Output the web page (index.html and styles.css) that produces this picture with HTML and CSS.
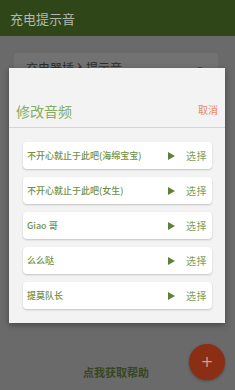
FILE: index.html
```html
<!DOCTYPE html>
<html>
<head>
<meta charset="utf-8">
<link rel="stylesheet" href="styles.css">
</head>
<body>
<div class="app">
  <div class="header"><span class="title">充电提示音</span></div>
  <div class="main">
    <div class="bgcard">
      <span class="bgcard-text">充电器插入提示音</span>
      <span class="bgdot"></span>
    </div>
    <div class="help">点我获取帮助</div>
  </div>
  <div class="fab"><span class="plus">+</span></div>
  <div class="dialog">
    <div class="dlg-head">
      <span class="dlg-title">修改音频</span>
      <span class="dlg-cancel">取消</span>
    </div>
    <div class="dlg-list">
      <div class="item"><span class="name">不开心就止于此吧(海绵宝宝)</span><span class="play"></span><span class="pick">选择</span></div>
      <div class="item"><span class="name">不开心就止于此吧(女生)</span><span class="play"></span><span class="pick">选择</span></div>
      <div class="item"><span class="name">Giao 哥</span><span class="play"></span><span class="pick">选择</span></div>
      <div class="item"><span class="name">么么哒</span><span class="play"></span><span class="pick">选择</span></div>
      <div class="item"><span class="name">提莫队长</span><span class="play"></span><span class="pick">选择</span></div>
    </div>
  </div>
</div>
</body>
</html>
```
FILE: styles.css
```css
* { box-sizing: border-box; }
html, body { margin: 0; padding: 0; }
body {
  width: 235px; height: 390px; overflow: hidden;
  font-family: "Noto Sans CJK SC", "Noto Sans", sans-serif;
  background: #6a6a6a;
}
.app { position: relative; width: 235px; height: 390px; display: flex; flex-direction: column; }
.header {
  height: 36px; background: #2f4619;
  display: flex; align-items: center; padding-left: 10px;
}
.title { color: #b3b8ad; font-size: 13px; line-height: 1; }
.main { flex: 1; display: flex; flex-direction: column; padding: 17px 17px 0 14px; }
.bgcard {
  height: 40px; background: #727272; border-radius: 3px;
  display: flex; justify-content: space-between; align-items: flex-start;
  padding: 8px 14px 0 12px;
}
.bgcard-text { color: #2c2c2c; font-size: 12px; line-height: 14px; }
.bgdot { width: 8px; height: 4px; margin-top: 6px; border-radius: 4px 4px 0 0; background: #5a3a34; }
.help {
  margin-top: auto; margin-bottom: 10px; text-align: center;
  font-size: 11px; color: #37461f; font-weight: 600;
}
.fab {
  position: absolute; left: 189px; top: 344px; width: 36px; height: 36px;
  border-radius: 50%; background: #8c2e13;
  display: flex; align-items: center; justify-content: center;
  box-shadow: 0 1px 3px rgba(0,0,0,0.3);
}
.plus { color: #d3a08a; font-size: 15px; line-height: 1; font-family: "DejaVu Sans", sans-serif; }
.dialog {
  position: absolute; left: 9px; top: 68px; width: 216px; height: 255px;
  background: #f3f3f3; box-shadow: 0 2px 6px rgba(0,0,0,0.35);
  display: flex; flex-direction: column;
}
.dlg-head {
  height: 60px; border-bottom: 1px solid #d6d6d6;
  display: flex; align-items: flex-end; justify-content: space-between;
  padding: 0 7px 8px 7px;
}
.dlg-title { color: #86ad62; font-size: 14px; line-height: 16px; }
.dlg-cancel { color: #e48a64; font-size: 10px; line-height: 14px; margin-bottom: 2px; }
.dlg-list {
  display: flex; flex-direction: column; gap: 8px;
  padding: 14px 13px 0 14px;
}
.item {
  height: 27px; background: #fff; border-radius: 4px;
  box-shadow: 0 1px 2px rgba(0,0,0,0.2);
  display: flex; align-items: center; padding: 0 5px 0 4px;
}
.name { flex: 1; color: #6f9045; font-size: 9px; font-weight: 500; white-space: nowrap; }
.play {
  width: 0; height: 0; margin-right: 11px;
  border-left: 7px solid #5f8137; border-top: 4.5px solid transparent; border-bottom: 4.5px solid transparent;
}
.pick { color: #82a060; font-size: 10px; letter-spacing: 0.5px; }
```
